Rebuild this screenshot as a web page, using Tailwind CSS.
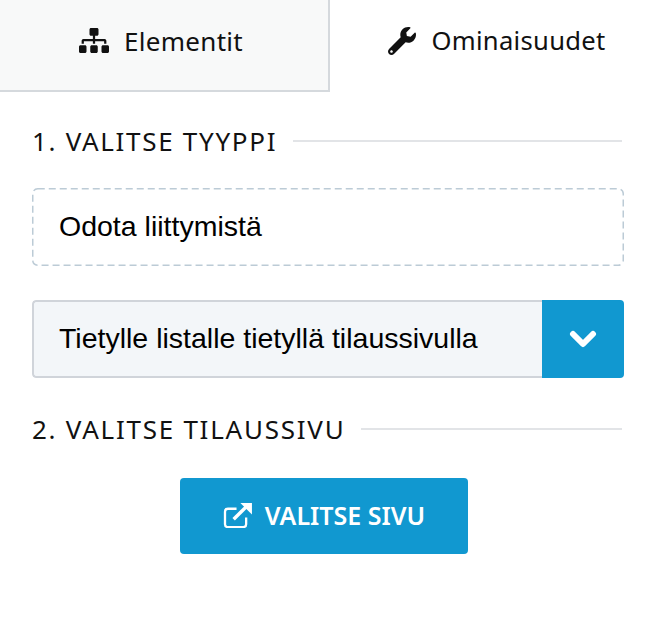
<!DOCTYPE html>
<html lang="fi"><head><meta charset="utf-8"><script src="https://cdn.jsdelivr.net/npm/@tailwindcss/browser@4"></script></head>
<body class="bg-white">
<div class="w-[652px] h-[644px] bg-white text-[#111] font-['Noto_Sans',sans-serif] overflow-hidden">
  <div class="flex h-[92px]">
    <div class="w-[330px] bg-[#f8f9f9] border-b-2 border-r-2 border-[#d5d9dd] flex items-center justify-center gap-[15px] pr-[6px] pb-[9px]">
      <svg class="w-[30px] h-[25px]" viewBox="0 0 640 512" preserveAspectRatio="none" fill="currentColor"><path d="M128 352H32c-17.67 0-32 14.33-32 32v96c0 17.67 14.33 32 32 32h96c17.67 0 32-14.33 32-32v-96c0-17.67-14.33-32-32-32zm-24-80h192v48h48v-48h192v48h48v-57.59c0-21.17-17.23-38.41-38.41-38.41H344v-64h40c17.67 0 32-14.33 32-32V32c0-17.67-14.33-32-32-32H256c-17.67 0-32 14.33-32 32v96c0 17.67 14.33 32 32 32h40v64H94.41C73.23 224 56 241.23 56 262.41V320h48v-48zm264 80h-96c-17.67 0-32 14.33-32 32v96c0 17.67 14.33 32 32 32h96c17.67 0 32-14.33 32-32v-96c0-17.67-14.33-32-32-32zm240 0h-96c-17.67 0-32 14.33-32 32v96c0 17.67 14.33 32 32 32h96c17.67 0 32-14.33 32-32v-96c0-17.67-14.33-32-32-32z"/></svg>
      <span class="text-[26px] leading-none tracking-[0.3px]">Elementit</span>
    </div>
    <div class="flex-1 flex items-center justify-center gap-[15px] pb-[10px] pl-[12px]">
      <svg class="w-[28px] h-[28px]" viewBox="0 0 512 512" fill="currentColor"><path d="M507.73 109.1c-2.24-9.03-13.54-12.09-20.12-5.51l-74.36 74.36-67.88-11.31-11.31-67.88 74.36-74.36c6.62-6.62 3.43-17.9-5.66-20.16-47.38-11.74-99.55.91-136.58 37.93-39.64 39.64-50.55 97.1-34.05 147.2L18.74 402.76c-24.99 24.99-24.99 65.51 0 90.5 24.99 24.99 65.51 24.99 90.5 0l213.21-213.21c50.12 16.71 107.47 5.68 147.37-34.22 37.07-37.07 49.7-89.32 37.91-136.73zM64 472c-13.25 0-24-10.75-24-24 0-13.26 10.75-24 24-24s24 10.74 24 24c0 13.25-10.75 24-24 24z"/></svg>
      <span class="text-[25.6px] leading-none tracking-[0.3px]">Ominaisuudet</span>
    </div>
  </div>
  <div class="px-[30px] pt-[34px]">
    <div class="flex items-center h-[30px] mb-[32px] pl-[2px]">
      <span class="text-[26px] leading-none tracking-[1.7px] whitespace-nowrap">1. VALITSE TYYPPI</span>
      <div class="flex-1 h-[2px] bg-[#e2e4e7] ml-[16px]"></div>
    </div>
  </div>
  <div class="relative mx-[32px] w-[592px] h-[78px] flex items-center pl-[27px] text-black font-['Liberation_Sans',sans-serif] text-[28.5px] pb-[2px]">
    <svg class="absolute inset-0 w-[592px] h-[78px]" viewBox="0 0 592 78" fill="none"><rect x="0.75" y="0.75" width="590.5" height="76.5" rx="5" stroke="#bccbd6" stroke-width="1.5" stroke-dasharray="7 4"/></svg>
    Odota liittymistä
  </div>
  <div class="mx-[32px] w-[592px] h-[78px] mt-[34px] flex rounded-[4px] overflow-hidden">
    <div class="flex-1 bg-[#f3f6f9] border-2 border-r-0 border-[#d0d4da] rounded-l-[4px] flex items-center pl-[25px] pb-[2px] text-black font-['Liberation_Sans',sans-serif] text-[28.5px]">Tietylle listalle tietyllä tilaussivulla</div>
    <div class="w-[82px] bg-[#1198d0] flex items-center justify-center">
      <svg class="w-[28px] h-[20px]" viewBox="0 0 28 20" fill="none" stroke="#fff" stroke-width="6" stroke-linecap="round" stroke-linejoin="round"><path d="M4 5l10 10L24 5"/></svg>
    </div>
  </div>
  <div class="px-[30px] pt-[36px]">
    <div class="flex items-center h-[30px] pl-[2px]">
      <span class="text-[26px] leading-none tracking-[1.75px] whitespace-nowrap">2. VALITSE TILAUSSIVU</span>
      <div class="flex-1 h-[2px] bg-[#e2e4e7] ml-[16px]"></div>
    </div>
  </div>
  <div class="flex justify-center mt-[34px] pr-[4px]">
    <div class="w-[288px] h-[76px] bg-[#1198d0] rounded-[4px] flex items-center justify-center gap-[13px] text-white pb-[2px]">
      <svg class="w-[29px] h-[25px]" viewBox="0 0 30 26" fill="none" stroke="#fff" stroke-width="2.4"><path d="M24 15v7a3 3 0 0 1-3 3H5a3 3 0 0 1-3-3V9a3 3 0 0 1 3-3h9"/><path d="M11 17L25 3" stroke-width="3.6"/><path d="M18 0h12v12z" fill="#fff" stroke="none"/></svg>
      <span class="text-[25px] leading-none font-semibold">VALITSE SIVU</span>
    </div>
  </div>
</div>
</body></html>
